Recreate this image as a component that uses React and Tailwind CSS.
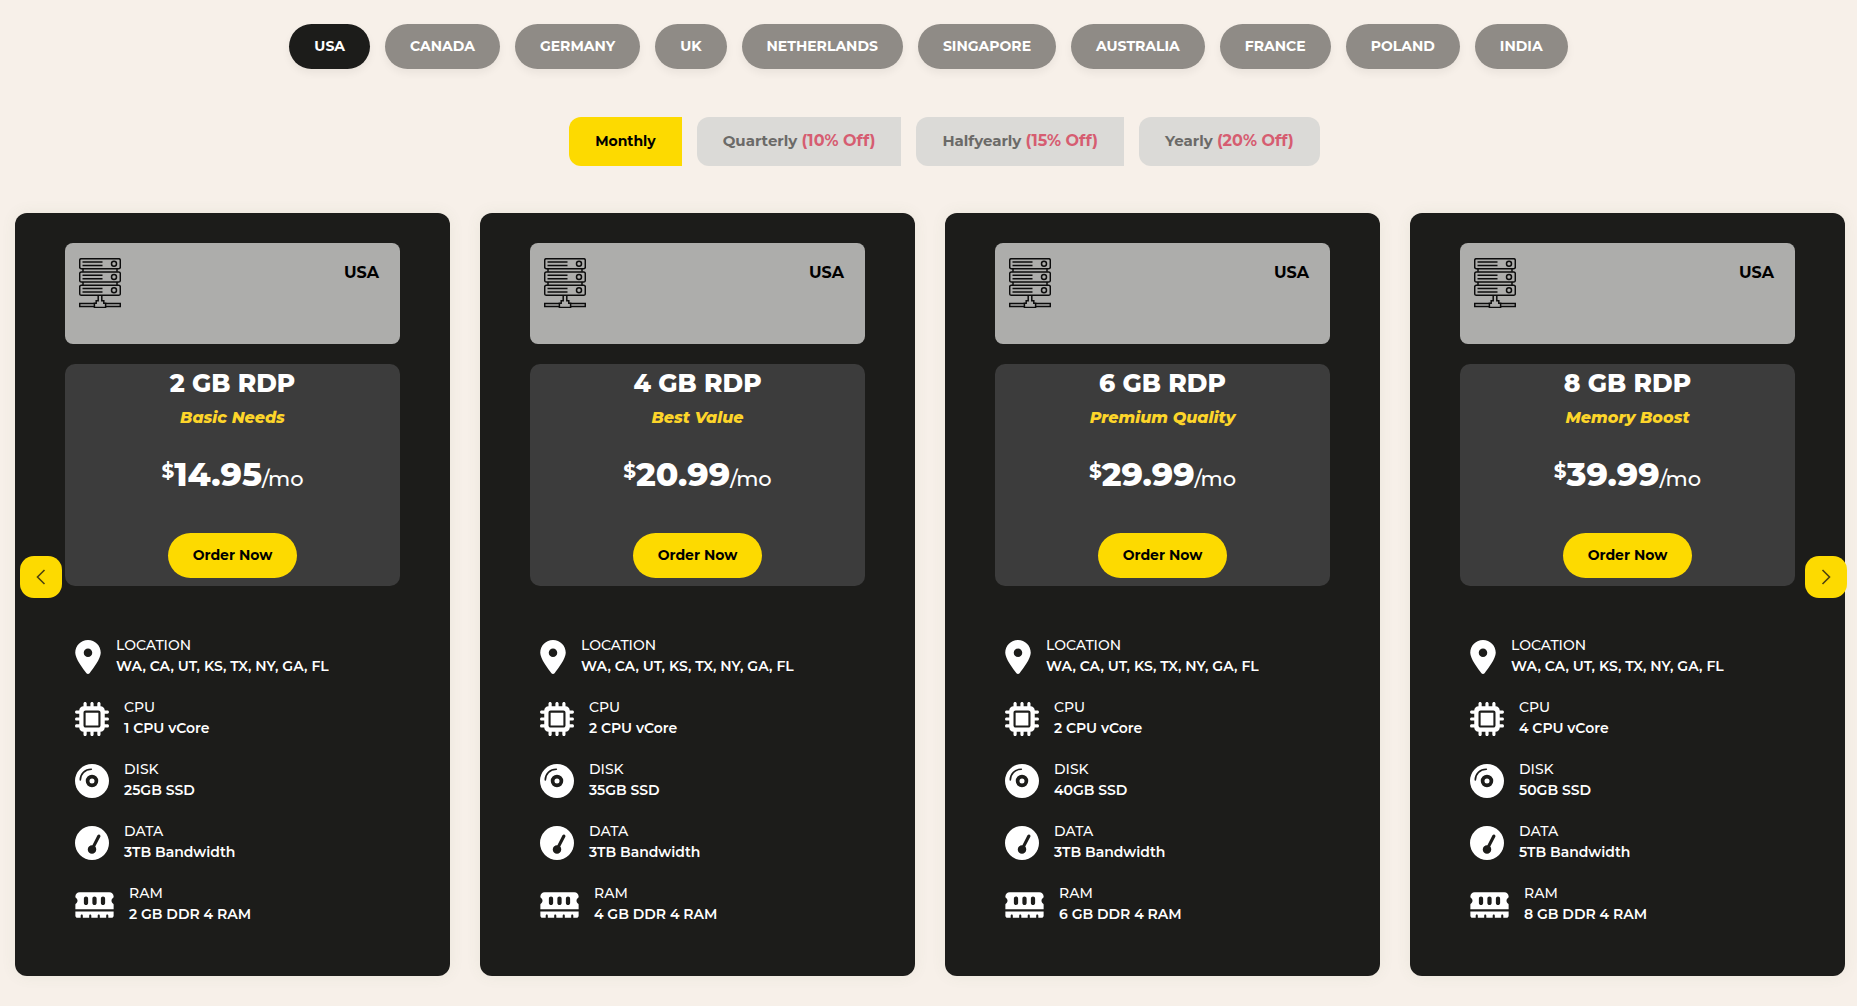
import React, { useState } from "react";
import { FaLocationDot, FaMicrochip, FaGaugeSimpleHigh, FaMemory } from "react-icons/fa6";

const countries = [
  "USA",
  "CANADA",
  "GERMANY",
  "UK",
  "NETHERLANDS",
  "SINGAPORE",
  "AUSTRALIA",
  "FRANCE",
  "POLAND",
  "INDIA",
];

const cycles = [
  { name: "Monthly" },
  { name: "Quarterly", off: "(10% Off)" },
  { name: "Halfyearly", off: "(15% Off)" },
  { name: "Yearly", off: "(20% Off)" },
];

const plans = [
  { ram: 2, tagline: "Basic Needs", price: "14.95", cpu: 1, disk: 25, data: 3 },
  { ram: 4, tagline: "Best Value", price: "20.99", cpu: 2, disk: 35, data: 3 },
  { ram: 6, tagline: "Premium Quality", price: "29.99", cpu: 2, disk: 40, data: 3 },
  { ram: 8, tagline: "Memory Boost", price: "39.99", cpu: 4, disk: 50, data: 5 },
];

function ServerIcon() {
  return (
    <svg width="42" height="50" viewBox="0 0 42 50" fill="none" stroke="#0c0c0c" strokeWidth="1.5" aria-hidden="true">
      {[0, 13.3, 26.6].map((y) => (
        <g key={y} transform={`translate(0 ${y})`}>
          <rect x="0.7" y="0.7" width="40.6" height="10" rx="1.6" />
          <path d="M3.5 4H23.5M3.5 7.4H23.5" />
          <circle cx="35" cy="5.7" r="2.5" />
        </g>
      ))}
      <path d="M4 10.8v3M38 10.8v3M4 24.1v3M38 24.1v3" />
      <path d="M19.2 37.6v5.2h-2v2.4h-1.8v4.2h11.2v-4.2h-1.8v-2.4h-2v-5.2" />
      <path d="M15.4 45.4H.7v3.2h14.7M26.6 45.4h14.7v3.2H26.6" />
    </svg>
  );
}

function DiskIcon() {
  return (
    <svg width="34" height="34" viewBox="0 0 512 512" aria-hidden="true">
      <circle cx="256" cy="256" r="256" fill="#fff" />
      <circle cx="256" cy="256" r="66" fill="none" stroke="#1c1c1a" strokeWidth="56" />
      <path d="M80 240C80 150 150 80 246 80" fill="none" stroke="#1c1c1a" strokeWidth="24" strokeLinecap="round" />
    </svg>
  );
}

function Feature({ icon, label, value }) {
  return (
    <li className="flex h-[42px] items-center gap-[15px]">
      {icon}
      <div className="pb-[3px]">
        <p className="font-medium">{label}</p>
        <p className="font-semibold">{value}</p>
      </div>
    </li>
  );
}

function PlanCard({ plan, country }) {
  return (
    <article className="rounded-xl bg-[#1c1c1a] px-[50px] pt-[30px] pb-[50px] shadow-[0_0_15px_rgba(90,110,80,0.08)]">
      <div className="flex h-[101px] items-start justify-between rounded-lg bg-[#adadab] py-[15px] pr-[21px] pl-[14px]">
        <ServerIcon />
        <span className="text-base leading-[30px] font-bold text-black">{country}</span>
      </div>

      <div className="mt-5 flex h-[222px] flex-col items-center rounded-[10px] bg-[#3c3c3c] pb-2 text-white">
        <h2 className="pt-1 text-[25px] leading-[30px] font-extrabold">{plan.ram} GB RDP</h2>
        <p className="mt-2 text-base leading-6 font-extrabold text-[#fdd52a] italic">{plan.tagline}</p>
        <p className="mt-6 flex leading-10">
          <span className="text-xl leading-[34px] font-bold">$</span>
          <span className="text-[33px] font-extrabold">{plan.price}</span>
          <span className="pt-[5px] text-[21px] font-medium">/mo</span>
        </p>
        <button className="mt-auto h-[45px] rounded-full bg-[#fdda00] px-[25px] pb-0.5 text-sm font-bold text-black">
          Order Now
        </button>
      </div>

      <ul className="mt-[50px] flex flex-col gap-5 pl-[10px] text-sm leading-[21px] text-white">
        <Feature icon={<FaLocationDot className="h-[34px] w-[26px]" />} label="LOCATION" value="WA, CA, UT, KS, TX, NY, GA, FL" />
        <Feature icon={<FaMicrochip className="size-[34px]" />} label="CPU" value={`${plan.cpu} CPU vCore`} />
        <Feature icon={<DiskIcon />} label="DISK" value={`${plan.disk}GB SSD`} />
        <Feature icon={<FaGaugeSimpleHigh className="size-[34px]" />} label="DATA" value={`${plan.data}TB Bandwidth`} />
        <Feature icon={<FaMemory className="h-[34px] w-[39px]" />} label="RAM" value={`${plan.ram} GB DDR 4 RAM`} />
      </ul>
    </article>
  );
}

function ArrowIcon({ d }) {
  return (
    <svg width="10" height="16" viewBox="0 0 10 16" fill="none" stroke="#4d4310" strokeWidth="1.6" aria-hidden="true">
      <path d={d} />
    </svg>
  );
}

export default function App() {
  const [country, setCountry] = useState("USA");
  const [cycle, setCycle] = useState("Monthly");

  return (
    <main className="min-h-screen bg-[#f7f0e9] pt-6 pb-[30px] font-['Montserrat','Inter',sans-serif]">
      <nav className="flex flex-wrap justify-center gap-[15px]">
        {countries.map((c) => (
          <button
            key={c}
            onClick={() => setCountry(c)}
            className={`h-[45px] rounded-full px-[25px] pb-0.5 text-sm font-bold text-white shadow-[0_4px_8px_rgba(0,0,0,0.06)] ${
              c === country ? "bg-[#1c1c1a]" : "bg-[#8f8b86]"
            }`}
          >
            {c}
          </button>
        ))}
      </nav>

      <div className="mt-12 flex flex-wrap justify-center gap-[15px] pl-8">
        {cycles.map(({ name, off }) => (
          <button
            key={name}
            onClick={() => setCycle(name)}
            className={`h-[49px] rounded-l-xl px-[26px] pb-0.5 font-bold last:rounded-r-xl ${
              name === cycle ? "bg-[#fdda00] text-sm text-black" : "bg-[#dbdad7] text-[15px] text-[#6b6a68]"
            }`}
          >
            {name} {off && <span className="text-base text-[#d65d71]">{off}</span>}
          </button>
        ))}
      </div>

      <section className="relative mt-3 pt-[35px] pr-3 pl-[15px]">
        <div className="grid grid-cols-4 gap-[30px]">
          {plans.map((plan) => (
            <PlanCard key={plan.ram} plan={plan} country={country} />
          ))}
        </div>
        <button
          aria-label="Previous"
          className="absolute top-1/2 left-5 flex size-[42px] -translate-y-1/2 items-center justify-center rounded-[14px] bg-[#fdda00]"
        >
          <ArrowIcon d="M8.5 1 1.5 8l7 7" />
        </button>
        <button
          aria-label="Next"
          className="absolute top-1/2 right-[10px] flex size-[42px] -translate-y-1/2 items-center justify-center rounded-[14px] bg-[#fdda00]"
        >
          <ArrowIcon d="M1.5 1l7 7-7 7" />
        </button>
      </section>
    </main>
  );
}
